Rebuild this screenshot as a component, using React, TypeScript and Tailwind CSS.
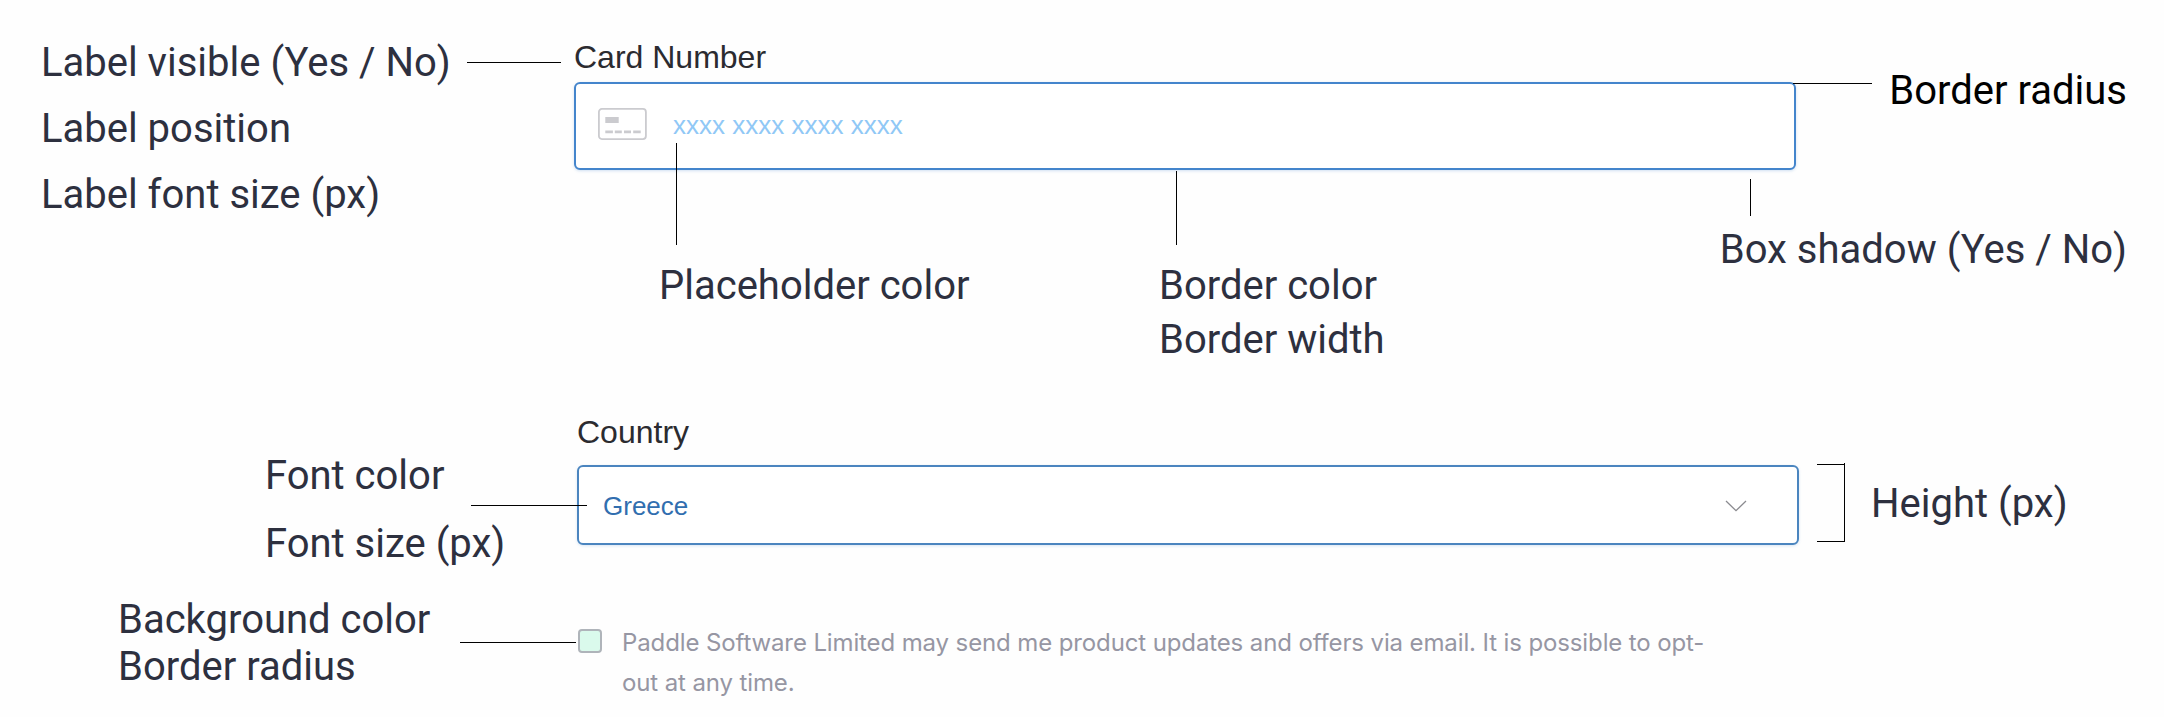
import React from 'react';
import type { ReactNode } from 'react';

// x1, y1, x2, y2
const leaderLines = [
  [467, 62.5, 561, 62.5],
  [676.5, 143, 676.5, 245],
  [1176.5, 171, 1176.5, 245],
  [1793, 83.5, 1872, 83.5],
  [1750.5, 179, 1750.5, 216],
  [471, 505.5, 587, 505.5],
  [1817, 464.5, 1845, 464.5],
  [1844.5, 463, 1844.5, 542],
  [1817, 541.5, 1845, 541.5],
  [460, 642.5, 576, 642.5],
];

function LeaderLines() {
  return (
    <svg className="pointer-events-none absolute inset-0" width="2164" height="717" stroke="#000" strokeWidth="1">
      {leaderLines.map(([x1, y1, x2, y2], index) => (
        <line key={index} x1={x1} y1={y1} x2={x2} y2={y2} />
      ))}
    </svg>
  );
}

function CardIcon() {
  return (
    <svg width="49" height="32" viewBox="0 0 49 32" fill="none">
      <rect x="0.9" y="0.9" width="47" height="30.2" rx="3" stroke="#cbcbcf" strokeWidth="1.8" />
      <rect x="7.3" y="9" width="13.4" height="6" fill="#cbcbcf" />
      <path d="M7.3 23.9h7.6M16.8 23.9h7M26 23.9h7M35.2 23.9h7.5" stroke="#cbcbcf" strokeWidth="2.8" />
    </svg>
  );
}

function FieldLabel({ children }: { children: ReactNode }) {
  return (
    <label className="block font-['Liberation_Sans',sans-serif] text-[32px] leading-[44px] text-[#2b2b30]">
      {children}
    </label>
  );
}

export default function App() {
  return (
    <main className="relative h-[717px] w-[2164px] overflow-hidden whitespace-nowrap bg-[#fefefe] font-[Roboto,sans-serif] text-[40px] text-[#2d303f]">
      {/* Card number */}
      <section className="flex h-[400px]">
        <div className="w-[574px] shrink-0 pl-[41px] pt-[30px] leading-[66px]">
          <p>Label visible (Yes / No)</p>
          <p>Label position</p>
          <p>Label font size (px)</p>
        </div>

        <div className="w-[1222px] shrink-0 pt-[35px]">
          <FieldLabel>Card Number</FieldLabel>
          <div className="mt-[3px] flex h-[88px] items-center rounded-md border-2 border-[#4485cc] bg-white pb-1 pl-[22px] shadow-[0_1px_3px_rgba(68,133,204,0.25)]">
            <CardIcon />
            <span className="ml-[26px] pt-[2px] font-['Liberation_Sans',sans-serif] text-[26px] leading-8 text-[#90c8f6]">
              xxxx xxxx xxxx xxxx
            </span>
          </div>
          <div className="mt-[89px] flex pl-[85px] leading-[54px]">
            <p className="w-[500px]">Placeholder color</p>
            <div>
              <p>Border color</p>
              <p>Border width</p>
            </div>
          </div>
        </div>

        <div className="flex w-[368px] shrink-0 flex-col items-end gap-[105px] pr-[37px] pt-[64px] leading-[54px]">
          <p className="text-black">Border radius</p>
          <p>Box shadow (Yes / No)</p>
        </div>
      </section>

      {/* Country */}
      <section className="flex h-[180px]">
        <div className="w-[577px] shrink-0 pl-[265px] pt-[42px] leading-[68px]">
          <p>Font color</p>
          <p>Font size (px)</p>
        </div>

        <div className="w-[1222px] shrink-0 pt-[10px]">
          <FieldLabel>Country</FieldLabel>
          <div className="mt-[11px] flex h-20 items-center justify-between rounded-md border-2 border-[#4b85bf] bg-white pl-6 pr-[50px] shadow-[0_1px_3px_rgba(68,133,204,0.2)]">
            <span className="pt-[2px] font-['Liberation_Sans',sans-serif] text-[26px] leading-8 text-[#316eaf]">Greece</span>
            <svg className="mt-[2px]" width="22" height="12" viewBox="0 0 22 12" fill="none" stroke="#8b8b90" strokeWidth="1.3">
              <path d="M1 1l10 9.7L21 1" />
            </svg>
          </div>
        </div>

        <p className="pl-[72px] pt-[77px] leading-[54px]">Height (px)</p>
      </section>

      {/* Marketing consent */}
      <section className="flex">
        <div className="w-[578px] shrink-0 pl-[118px] pt-[16px] leading-[47px]">
          <p>Background color</p>
          <p>Border radius</p>
        </div>
        <span className="mt-[49px] size-6 shrink-0 rounded-[4px] border-2 border-[#afb4ba] bg-[#dafaec]" />
        <p className="ml-5 mt-[43px] font-[Inter,sans-serif] text-2xl leading-10 tracking-[-0.12px] text-[#9696a3]">
          Paddle Software Limited may send me product updates and offers via email. It is possible to opt-
          <br />
          out at any time.
        </p>
      </section>

      <LeaderLines />
    </main>
  );
}
